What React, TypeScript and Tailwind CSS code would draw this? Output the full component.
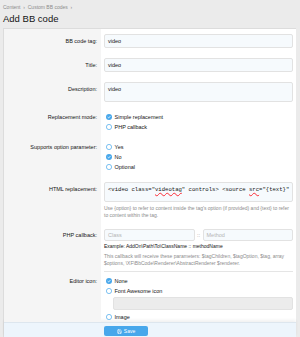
import React from "react";
import {Save} from "lucide-react";

type RowProps = {
    label: string;
    lh: string;
    pad?: string;
    children: React.ReactNode;
};

const Row = ({label, lh, pad = "py-[5px]", children}: RowProps) => (
    <div className="flex">
        <div className={`w-[97px] shrink-0 bg-[#f5f5f5] ${pad} pr-[4px] text-right`}>
            <span className={`block ${lh}`}>{label}</span>
        </div>
        <div className={`min-w-0 flex-1 ${pad} pl-[3px] pr-[3px]`}>{children}</div>
    </div>
);

const Radio = ({label, checked}: {label: string; checked?: boolean}) => (
    <div className="flex h-[10px] items-center gap-[1.5px] pl-[2px]">
        <svg width="6" height="6" viewBox="0 0 12 12" className="shrink-0">
            {checked ? (
                <>
                    <circle cx="6" cy="6" r="6" fill="#47a7eb" />
                    <path d="M3.3 6.2 L5.2 8 L8.8 4.2" stroke="#fff" strokeWidth="1.6" fill="none" />
                </>
            ) : (
                <circle cx="6" cy="6" r="5.2" fill="#fff" stroke="#47a7eb" strokeWidth="1.4" />
            )}
        </svg>
        <span className="pl-[1px]">{label}</span>
    </div>
);

const inputCls = "rounded-[2px] border border-[#e2e2e2] bg-[#f6fafd] px-[3px] text-[#141414]";

const htmlHint = "Use {option} to refer to content inside the tag's option (if provided) and {text} to refer to content within the tag.";

export default function App() {
    return (
        <div className="h-[337px] overflow-hidden bg-[#ebebeb] pl-[3px] pr-[4px] text-[5.5px] text-[#141414] [font-family:'Liberation_Sans',Arial,sans-serif]">
            <div className="pt-[4px] text-[5px] leading-[6px] text-[#8c8c8c]">
                Content &nbsp;›&nbsp; Custom BB codes &nbsp;›
            </div>
            <h1 className="mt-[3px] text-[9.5px] leading-[12px] font-normal text-[#141414]">Add BB code</h1>

            <div className="mt-[3px] border-l border-t border-[#dcdcdc] bg-white">
                <Row label="BB code tag:" lh="leading-[14px]">
                    <div className={`${inputCls} h-[14px] leading-[12px]`}>video</div>
                </Row>
                <Row label="Title:" lh="leading-[14px]">
                    <div className={`${inputCls} h-[14px] leading-[12px]`}>video</div>
                </Row>
                <Row label="Description:" lh="leading-[14px]">
                    <div className={`${inputCls} h-[20px] leading-[12px]`}>video</div>
                </Row>
                <Row label="Replacement mode:" lh="leading-[10px]">
                    <Radio label="Simple replacement" checked />
                    <Radio label="PHP callback" />
                </Row>
                <Row label="Supports option parameter:" lh="leading-[10px]">
                    <Radio label="Yes" />
                    <Radio label="No" checked />
                    <Radio label="Optional" />
                </Row>
                <Row label="HTML replacement:" lh="leading-[14px]">
                    <div className={`${inputCls} h-[20px] overflow-hidden whitespace-nowrap pt-[1px] text-[5.6px] leading-[12px] [font-family:'Liberation_Mono',monospace]`}>
                        &lt;video class="<span className="underline decoration-red-500 decoration-wavy">videotag</span>" controls&gt; &lt;source <span className="underline decoration-red-500 decoration-wavy">src</span>="{"{text}"}" t
                    </div>
                    <div className="mt-[3px] text-[5px] leading-[7px] text-[#8c8c8c]">{htmlHint}</div>
                </Row>
                <Row label="PHP callback:" lh="leading-[12px]" pad="pt-[5px] pb-[4px]">
                    <div className="flex items-center">
                        <div className={`${inputCls} h-[12px] flex-1 leading-[10px] text-[#b5b5b5]`}>Class</div>
                        <span className="w-[8px] text-center text-[#8c8c8c]">::</span>
                        <div className={`${inputCls} h-[12px] flex-1 leading-[10px] text-[#b5b5b5]`}>Method</div>
                    </div>
                    <div className="mt-[2px] text-[5px] leading-[7px] text-[#141414]">
                        Example: AddOn\Path\To\ClassName :: methodName
                    </div>
                    <div className="mt-[3px] pr-[6px] text-[5px] leading-[7px] text-[#8c8c8c]">
                        This callback will receive these parameters: $tagChildren, $tagOption, $tag, array $options, \XF\BbCode\Renderer\AbstractRenderer $renderer.
                    </div>
                </Row>
                <div className="flex">
                    <div className="w-[97px] shrink-0 bg-[#f5f5f5]" />
                    <div className="mx-[3px] h-px flex-1 bg-[#e5e5e5]" />
                </div>
                <Row label="Editor icon:" lh="leading-[10px]" pad="pt-[4px] pb-0">
                    <Radio label="None" checked />
                    <Radio label="Font Awesome icon" />
                    <div className="ml-[9px] mt-[1px] h-[13px] rounded-[2px] border border-[#e2e2e2] bg-[#ececec]" />
                    <div className="mt-[2px]">
                        <Radio label="Image" />
                    </div>
                </Row>
                <div className="flex h-[15px] border-t border-[#dde6ee] bg-[#edf5fc] pt-[3px] shadow-[0_-2px_3px_rgba(0,0,0,0.06)]">
                    <div className="w-[100px] shrink-0" />
                    <div className="flex h-[10px] w-[44px] items-center justify-center gap-[2px] rounded-[2px] bg-[#47a7eb] text-[5px] leading-[10px] text-white">
                        <Save size={5} strokeWidth={2.5} />
                        <span>Save</span>
                    </div>
                </div>
            </div>
        </div>
    );
}
